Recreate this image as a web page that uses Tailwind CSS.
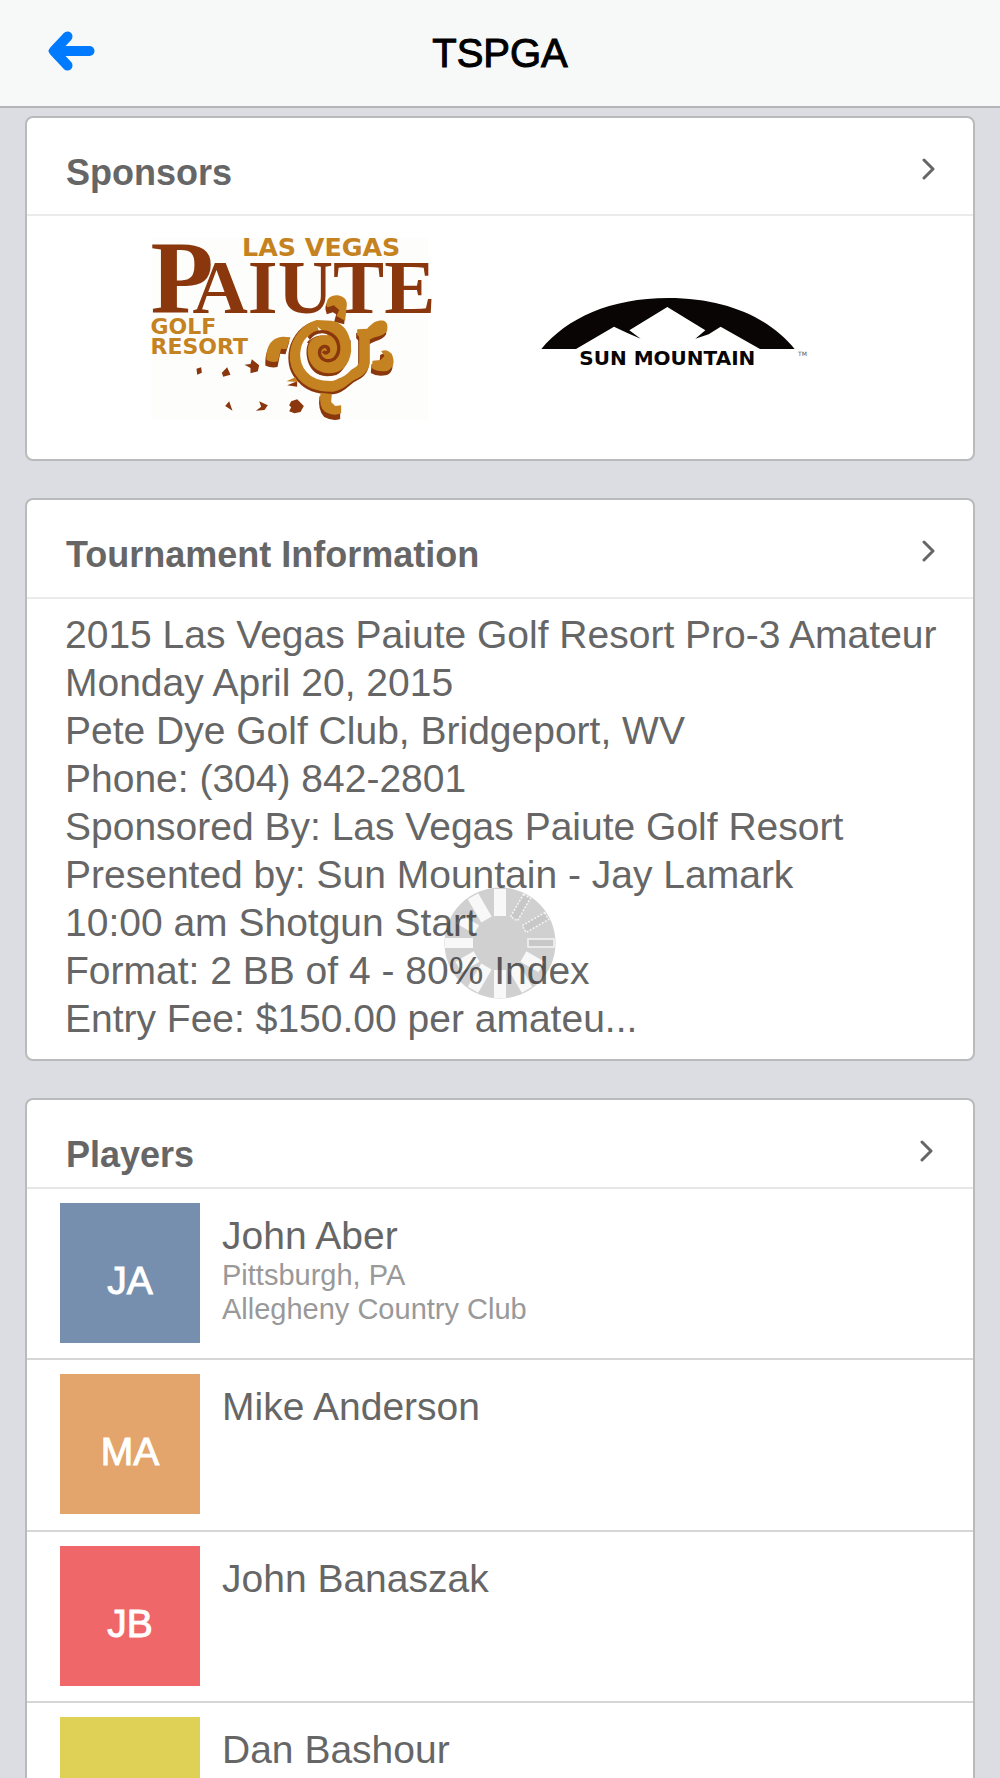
<!DOCTYPE html>
<html lang="en">
  <head>
    <meta charset="UTF-8" />
    <title>TSPGA</title>
    <meta name="viewport" content="width=device-width, initial-scale=1" />
    <script src="https://cdn.jsdelivr.net/npm/@tailwindcss/browser@4"></script>
  </head>
  <body class="h-screen flex flex-col overflow-hidden bg-[#dcdde2] text-[#666] font-['Liberation_Sans',Arial,sans-serif]">
    <!-- Nav bar -->
    <header class="grid grid-cols-[1fr_auto_1fr] items-center shrink-0 h-[108px] bg-[#f7f8f8] border-b-2 border-[#b4b5b8]">
      <button type="button" aria-label="Back" class="ml-12 mb-1 w-12 h-10">
        <svg class="w-12 h-10" viewBox="0 0 48 40" fill="none" stroke="#007aff" stroke-width="10" stroke-linecap="round" stroke-linejoin="round">
          <path d="M19.500 5.500L6 20L19.500 34.500" />
          <path d="M8 20H41.500" />
          <path d="M2 20L8 13V27Z" stroke-width="3" fill="#007aff" />
        </svg>
      </button>
      <h1 class="text-[40px] leading-[48px] text-black [-webkit-text-stroke:1px_#000]">TSPGA</h1>
    </header>

    <main class="flex-1 min-h-0 overflow-y-auto [scrollbar-width:none] px-[25px] pt-2 flex flex-col gap-[37px]">
      <!-- Sponsors -->
      <section class="shrink-0 bg-white border-2 border-[#b9babb] rounded-lg">
        <a href="#sponsors" class="flex justify-between items-start h-[98px] pl-[39px] pr-[37px] border-b-2 border-[#ebebeb]">
          <h2 class="pt-[35px] text-[36px] leading-[40px] font-bold">Sponsors</h2>
          <svg class="mt-10 w-4 h-[22px]" viewBox="0 0 16 22" fill="none" stroke="#666" stroke-width="3" stroke-linecap="round" stroke-linejoin="round"><path d="M4 2L13 11L4 20" /></svg>
        </a>
        <div class="flex justify-center items-center gap-[92px] pt-[22px] pb-[39px]">
          <svg class="w-[277px] h-[182px] shrink-0 overflow-visible" viewBox="64 54 830 546" role="img" aria-label="Las Vegas Paiute Golf Resort">
            <rect x="64" y="54" width="830" height="546" fill="#fdfdfc" />
            <g fill="#c58220" font-family="DejaVu Sans" font-weight="bold">
              <text x="574" y="108" text-anchor="middle" font-size="76">LAS VEGAS</text>
              <text x="62" y="342" font-size="66">GOLF</text>
              <text x="62" y="403" font-size="66">RESORT</text>
            </g>
            <g fill="#8a370d" font-family="Liberation Serif" font-weight="bold">
              <text x="62" y="278" font-size="310">P</text>
              <text x="188" y="278" font-size="230">AIUTE</text>
            </g>
            <!-- turtle with a dark lower edge -->
            <g transform="translate(390 210)">
              <g fill="#8a370d" transform="translate(-3 11)">
                <path d="M200 48C198 24 216 14 234 16C258 20 264 36 260 54L256 92L226 84L232 62L222 56L204 62Z" />
                <path d="M20 216C18 176 30 142 70 140L92 142L80 182L64 180L56 220Q38 224 20 216Z" />
                <path d="M292 118L322 116C340 96 352 90 372 92Q386 96 382 122C370 142 348 140 332 152L306 150L292 134Z" />
                <path d="M338 212L362 210L364 184Q380 174 396 192C406 216 402 236 384 244Q354 250 336 238Z" />
                <path d="M182 308L216 312L214 340L226 350L244 346V376Q222 384 196 370Q176 350 182 308Z" />
              </g>
              <path fill="none" stroke="#8a370d" stroke-width="32" stroke-linejoin="round" d="M311 142V226C308 246 292 254 272 264C254 276 246 294 218 297C180 298 148 290 128 266C104 242 100 220 102 192C106 158 128 124 160 112" />
              <path fill="#8a370d" d="M140 190C138 140 176 130 210 140L272 150C276 200 254 260 206 262C160 258 142 226 140 190Z" />
              <g fill="#c58220">
                <path d="M200 48C198 24 216 14 234 16C258 20 264 36 260 54L256 92L230 78L238 60L222 46L204 52Z" />
                <path d="M20 210C18 176 30 142 70 140L92 142L80 178L64 176L54 214Q38 220 20 210Z" />
                <path d="M292 118L322 116C340 96 352 90 372 92Q386 96 382 122C370 142 348 136 332 148L306 150L292 134Z" />
                <path d="M338 212L362 210L374 198L364 184Q380 174 396 192C406 216 402 232 384 242Q354 248 336 234Z" />
                <path d="M182 308L216 312L214 336L226 348L244 346V370Q222 380 196 366Q176 350 182 308Z" />
                <path d="M144 190C140 150 168 132 204 136L160 100L170 90L214 92C256 98 276 138 274 184C268 228 244 250 206 250C168 248 146 222 144 190Z" />
              </g>
              <path fill="none" stroke="#c58220" stroke-width="32" stroke-linejoin="round" d="M314 136V218C310 240 292 248 272 258C254 268 246 286 218 289C180 290 148 280 128 256C108 234 104 214 106 190C110 152 138 116 172 106" />
              <path fill="none" stroke="#8a370d" stroke-width="10" d="M142 158C154 122 192 118 216 134C240 150 244 186 224 206C200 222 174 204 180 180C188 164 208 166 206 184Q198 194 190 184" />
              <path fill="none" stroke="#fdfdfc" stroke-width="11" d="M146 144C124 166 124 196 132 214C144 244 168 262 200 264C244 264 262 250 282 220Q292 198 288 150" />
            </g>
            <path fill="#8a370d" d="M200 446L214 442L216 458L202 464ZM276 458L292 442L302 464L280 470ZM344 434L362 432L366 418L388 436L384 454L362 460L362 444ZM286 558L298 544L308 572ZM378 572L394 560L388 544L414 556L404 570ZM478 556L484 544L502 538L522 558L512 576L494 580L478 574L484 562ZM472 496L502 484V500Z" />
            <path fill="#c58220" d="M470 484L496 472L504 486Z" />
          </svg>
          <svg class="w-[330px] h-[100px] shrink-0" viewBox="0 0 990 300" role="img" aria-label="Sun Mountain">
            <path fill="#090504" d="M64 210C140 118 270 57 445 57S750 118 824 210H720L602 143L566 166L526 179L556 154L442 84L328 154L362 179L322 162L282 143L168 210Z" />
            <text x="442" y="258" text-anchor="middle" font-family="DejaVu Sans" font-weight="bold" font-size="60" fill="#090504">SUN MOUNTAIN</text>
            <text x="834" y="230" font-family="DejaVu Sans" font-size="18" fill="#555">TM</text>
          </svg>
        </div>
      </section>

      <!-- Tournament information -->
      <section class="shrink-0 bg-white border-2 border-[#b9babb] rounded-lg">
        <a href="#tournament" class="flex justify-between items-start h-[99px] pl-[39px] pr-[37px] border-b-2 border-[#ebebeb]">
          <h2 class="pt-[35px] text-[36px] leading-[40px] font-bold">Tournament Information</h2>
          <svg class="mt-10 w-4 h-[22px]" viewBox="0 0 16 22" fill="none" stroke="#666" stroke-width="3" stroke-linecap="round" stroke-linejoin="round"><path d="M4 2L13 11L4 20" /></svg>
        </a>
        <div class="pl-[38px] pt-3 pb-4 text-[39px] leading-[48px] whitespace-nowrap">
          <p>2015 Las Vegas Paiute Golf Resort Pro-3 Amateur</p>
          <p>Monday April 20, 2015</p>
          <p>Pete Dye Golf Club, Bridgeport, WV</p>
          <p>Phone: (304) 842-2801</p>
          <p>Sponsored By: Las Vegas Paiute Golf Resort</p>
          <p>Presented by: Sun Mountain - Jay Lamark</p>
          <p>10:00 am Shotgun Start</p>
          <p>Format: 2 BB of 4 - 80% Index</p>
          <p>Entry Fee: $150.00 per amateu...</p>
        </div>
      </section>

      <!-- Players -->
      <section class="shrink-0 bg-white border-2 border-[#b9babb] rounded-lg">
        <a href="#players" class="flex justify-between items-start h-[89px] pl-[39px] pr-[39px] border-b-2 border-[#e6e6e6]">
          <h2 class="pt-[35px] text-[36px] leading-[40px] font-bold">Players</h2>
          <svg class="mt-10 w-4 h-[22px]" viewBox="0 0 16 22" fill="none" stroke="#666" stroke-width="3" stroke-linecap="round" stroke-linejoin="round"><path d="M4 2L13 11L4 20" /></svg>
        </a>
        <ul class="divide-y-2 divide-[#d6d6d6]">
          <li class="flex gap-[22px] h-[171px] pl-[33px] pt-[14px]">
            <div class="flex items-center justify-center size-[140px] pt-4 bg-[#768fae] text-white text-[39px] leading-[44px] [-webkit-text-stroke:1px_#fff]">JA</div>
            <div class="pt-[11px]">
              <h3 class="text-[39px] leading-[44px]">John Aber</h3>
              <p class="text-[29px] leading-[34px] text-[#999]">Pittsburgh, PA</p>
              <p class="text-[29px] leading-[34px] text-[#999]">Allegheny Country Club</p>
            </div>
          </li>
          <li class="flex gap-[22px] h-[172px] pl-[33px] pt-[14px]">
            <div class="flex items-center justify-center size-[140px] pt-4 bg-[#e3a56b] text-white text-[39px] leading-[44px] [-webkit-text-stroke:1px_#fff]">MA</div>
            <h3 class="pt-[11px] text-[39px] leading-[44px]">Mike Anderson</h3>
          </li>
          <li class="flex gap-[22px] h-[171px] pl-[33px] pt-[14px]">
            <div class="flex items-center justify-center size-[140px] pt-4 bg-[#ef6769] text-white text-[39px] leading-[44px] [-webkit-text-stroke:1px_#fff]">JB</div>
            <h3 class="pt-[11px] text-[39px] leading-[44px]">John Banaszak</h3>
          </li>
          <li class="flex gap-[22px] h-[171px] pl-[33px] pt-[14px]">
            <div class="flex items-center justify-center size-[140px] pt-4 bg-[#dfd156] text-white text-[39px] leading-[44px] [-webkit-text-stroke:1px_#fff]">DB</div>
            <h3 class="pt-[11px] text-[39px] leading-[44px]">Dan Bashour</h3>
          </li>
        </ul>
      </section>
    </main>

    <!-- Loading spinner -->
    <div class="fixed inset-x-0 bottom-0 top-[108px] flex items-center justify-center pointer-events-none mix-blend-multiply">
      <svg class="size-28" viewBox="-56 -56 112 112" role="img" aria-label="Loading">
        <circle r="55.500" fill="#d0d0d0" />
        <g fill="#f8f8f8">
          <rect x="-6" y="-54" width="12" height="27" />
          <rect x="-6" y="-54" width="12" height="27" transform="rotate(-30)" />
          <rect x="-5" y="-48" width="10" height="21" transform="rotate(-60)" />
          <rect x="-5" y="-55" width="10" height="28" transform="rotate(-90)" />
          <rect x="-6" y="-48" width="12" height="21" transform="rotate(-120)" />
          <rect x="-6" y="-54" width="12" height="27" transform="rotate(-150)" />
          <rect x="-6" y="-55" width="12" height="28" transform="rotate(180)" />
          <rect x="-6" y="-54" width="12" height="27" transform="rotate(150)" />
          <rect x="-6" y="-48" width="12" height="21" transform="rotate(120)" />
        </g>
        <g fill="#c8c8c8" stroke="#f4f4f4" stroke-width="1.500">
          <rect x="-4" y="-54" width="8" height="26" transform="rotate(90)" />
          <rect x="-4" y="-54" width="8" height="26" stroke-dasharray="2 1.500" transform="rotate(60)" />
          <rect x="-4" y="-54" width="8" height="26" stroke-dasharray="2 1.500" transform="rotate(30)" />
        </g>
      </svg>
    </div>
  </body>
</html>
